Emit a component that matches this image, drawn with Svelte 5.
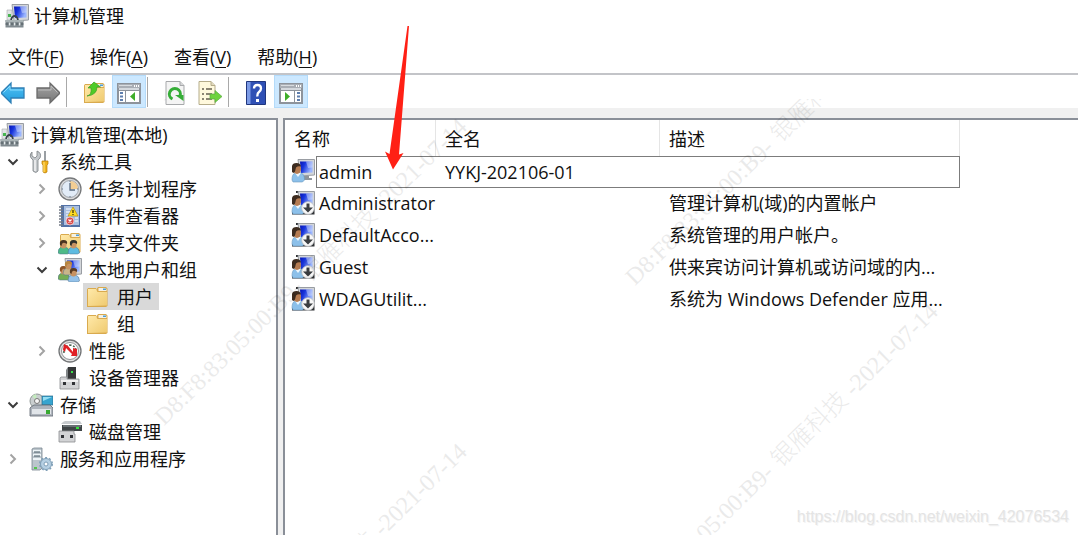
<script>
  const menus = [
    { label: '文件', key: 'F' },
    { label: '操作', key: 'A' },
    { label: '查看', key: 'V' },
    { label: '帮助', key: 'H' },
  ];

  const tools = [
    { icon: 'back', label: '后退', edge: true },
    { icon: 'forward', label: '前进' },
    null,
    { icon: 'folderUp', label: '上一级' },
    { icon: 'treePane', label: '显示/隐藏控制台树', on: true },
    null,
    { icon: 'refresh', label: '刷新' },
    { icon: 'export', label: '导出列表' },
    null,
    { icon: 'help', label: '帮助' },
    { icon: 'actionPane', label: '显示/隐藏操作窗格', on: true },
  ];

  const tree = [
    { level: 0, icon: 'computer', text: '计算机管理(本地)' },
    { level: 1, icon: 'tools', text: '系统工具', state: 'open' },
    { level: 2, icon: 'clock', text: '任务计划程序', state: 'closed' },
    { level: 2, icon: 'events', text: '事件查看器', state: 'closed' },
    { level: 2, icon: 'shared', text: '共享文件夹', state: 'closed' },
    { level: 2, icon: 'users', text: '本地用户和组', state: 'open' },
    { level: 3, icon: 'folder', text: '用户', selected: true },
    { level: 3, icon: 'folder', text: '组' },
    { level: 2, icon: 'perf', text: '性能', state: 'closed' },
    { level: 2, icon: 'device', text: '设备管理器' },
    { level: 1, icon: 'storage', text: '存储', state: 'open' },
    { level: 2, icon: 'disk', text: '磁盘管理' },
    { level: 1, icon: 'services', text: '服务和应用程序', state: 'closed' },
  ];

  const accounts = [
    { name: 'admin', full: 'YYKJ-202106-01', desc: '', focused: true },
    { name: 'Administrator', full: '', desc: '管理计算机(域)的内置帐户', disabled: true },
    { name: 'DefaultAcco...', full: '', desc: '系统管理的用户帐户。', disabled: true },
    { name: 'Guest', full: '', desc: '供来宾访问计算机或访问域的内...', disabled: true },
    { name: 'WDAGUtilit...', full: '', desc: '系统为 Windows Defender 应用...', disabled: true },
  ];

  const marks = [
    [157, 97], [157, 422], [157, 747], [628, 282], [628, 607],
  ];
</script>

{#snippet pane(right)}
  <path d="M0 2h24v21H0z" fill="#8d939b" />
  <path d="M1 3h22v4H1z" fill="#a9aeb5" />
  <path d="M2 4h13v1H2z" fill="#d8dce0" />
  <path d="M17 4h1v2h-1zM19 4h1v2h-1zM21 4h1v2h-1z" fill="#fff" />
  <path d="M2 7h20v2H2z" fill="#d5d9de" />
  <path d="M2 10h20v11H2z" fill="#fff" />
  {#if right}
    <path d="M15 10h1v11h-1z" fill="#8d939b" />
    <path d="M18 11h3v2h-3zM18 14.500h3v2h-3zM18 18h3v2h-3z" fill="#5f7fae" />
    <path d="m6 11 5 4.500L6 20z" fill="#3fae2a" />
  {:else}
    <path d="M8 10h1v11H8z" fill="#8d939b" />
    <path d="M3 11h3v2H3zM3 14.500h3v2H3zM3 18h3v2H3z" fill="#5f7fae" />
    <path d="m18 11-5 4.500 5 4.500z" fill="#3fae2a" />
  {/if}
{/snippet}

{#snippet folderShape()}
  <path d="M2 4.500 3 3h8l1 2V3.500l1-1.500h8l1.500 1.500V21L21 22H2z" fill="#d9aa4e" />
  <path d="M13.500 3h7l1 1v2h-8z" fill="#f5f1e3" />
  <path d="M18 3.500h3v1.500h-3z" fill="#4d9edb" />
  <path d="M3 4h8l1.500 3H22v13.500L3 21z" fill="url(#g-folder)" />
{/snippet}

{#snippet monitor()}
  <path d="M7 .5h16.500V16L9 17z" fill="#d3d6da" stroke="#999da3" />
  <path d="M9 2.500h12.500v11L10 14z" fill="url(#g-screen)" />
  <path d="M15 2.500h6.500v6L17 9z" fill="#e3ebff" opacity=".45" />
{/snippet}

{#snippet person(x, y, hair, shirt)}
  <g transform="translate({x} {y})">
    <path d="M0 13q0-5 3.500-6h4q4 1 4 6l-2 1H2z" fill={shirt} stroke="#4e718e" stroke-width=".5" />
    <ellipse cx="5.500" cy="4.500" rx="3.200" ry="4" fill="#c79262" />
    <path d="M2 5Q1 0 5.500 0T9 4L7 3Q4 2 3.500 6z" fill={hair} />
  </g>
{/snippet}

{#snippet icon(name)}
  <svg class="icon" viewBox="0 0 24 24" aria-hidden="true">
    {#if name === 'computer'}
      {@render monitor()}
      <path d="M2 6h5v10H2z" fill="#e1e4e6" stroke="#a4a9ad" stroke-width=".6" />
      <path d="M3 10h3v3H3z" fill="#46b54f" />
      <path d="M6 16Q7 12 9.500 12T13 16" fill="none" stroke="#39424c" stroke-width="1.800" />
      <path d="M.5 16h18v7.500H.5z" fill="#7f898e" />
      <path d="M.5 16h18v2H.5z" fill="#a9b3b5" />
      <path d="M4.500 18.500v3M9.500 18.500v3M14.500 18.500v3" stroke="#e4eaeb" stroke-width="1.500" />
      <path d="M.5 20h3M6 20h2.500M11 20h2.500M16 20h2.500" stroke="#4d575c" />
    {:else if name === 'tools'}
      <path d="M3 2v4l3 2 2-2V1q5 2 3 7l-2 2v11q-2 3-5 0V10Q-1 6 3 2z" fill="#c4c8cb" stroke="#7b8084" stroke-width=".8" />
      <path d="M6 10v11" stroke="#f5f5f5" stroke-width="1.500" />
      <path d="M15 1h2v10h-2z" fill="#9a9fa3" />
      <path d="M13 11h6v3l-1 1v7q-2 2-4 0v-7l-1-1z" fill="#f0b21d" stroke="#b57a07" stroke-width=".7" />
      <path d="M15 12v10" stroke="#ffe480" />
    {:else if name === 'clock'}
      <circle cx="12" cy="12" r="11" fill="#d9dadb" stroke="#77797b" stroke-width="1.300" />
      <circle cx="12" cy="12" r="8.500" fill="#e2ecf7" stroke="#9fa4aa" />
      <path d="M12 4a8 8 0 0 1 8 8h-8z" fill="#f2cd93" />
      <path d="M12 6v7h5" fill="none" stroke="#5a6b80" stroke-width="1.300" />
      <path d="M12 4v1M12 19v1M4 12h1M19 12h1" stroke="#607080" />
    {:else if name === 'events'}
      <path d="M3 1h19v22H3z" fill="#5372a7" />
      <path d="M6 2h15v19H6z" fill="#a9bfe0" />
      <path d="M8 5h7M8 8h5M8 11h5M8 14h3M8 17h3M17 14h3M17 17h3" stroke="#fff" />
      <path d="M1 3h4M1 6h4M1 9h4M1 12h4M1 15h4M1 18h4M1 21h4" stroke="#747b86" stroke-width="1.500" />
      <path d="M15 3 20 12H10z" fill="#ffdc23" stroke="#b89008" stroke-width=".7" />
      <path d="M15 6v3M15 10v1" stroke="#3b3510" stroke-width="1.300" />
      <circle cx="12" cy="17" r="4" fill="#d84b4b" stroke="#fff" stroke-width=".6" />
      <path d="m10.500 15.500 3 3M13.500 15.500l-3 3" stroke="#fff" stroke-width="1.200" />
    {:else if name === 'shared'}
      {@render folderShape()}
      {@render person(0, 9, '#4b3421', '#4dba87')}
      {@render person(10, 9, '#30312b', '#5ebbe0')}
    {:else if name === 'users'}
      {@render monitor()}
      {@render person(0, 8, '#8d5529', '#74ad55')}
      {@render person(5, 3, '#b88640', '#c9b58a')}
      {@render person(10, 10, '#5a3b22', '#94c2ea')}
    {:else if name === 'folder'}
      {@render folderShape()}
    {:else if name === 'perf'}
      <circle cx="12" cy="12" r="11" fill="#e2e2e2" stroke="#737577" stroke-width="1.300" />
      <circle cx="12" cy="12" r="8.500" fill="#fff" stroke="#929497" />
      <path d="M6 14q-1-7 6-8 7 1 6 8" fill="none" stroke="#43614e" stroke-dasharray="2 1.500" stroke-width="1.500" />
      <path d="m6 5 4 2 5 6V9l4 1v7h-6l1-2-6-6-1 4-2-2z" fill="#e02025" />
    {:else if name === 'device'}
      <path d="M10 1h8v12h-8z" fill="#353738" />
      <path d="M8 4 10 1v12H8z" fill="#828688" />
      <path d="M13 5h2v2h-2z" fill="#3ae14a" />
      <path d="M3 11h6v2h12v10H2V12z" fill="#d2d3d5" stroke="#8b8d90" stroke-width=".8" />
      <path d="M3 14h17v2H3z" fill="#f0f0f1" />
      <path d="M5 16h3v3H5zM14 16h3v3h-3z" fill="#303236" />
    {:else if name === 'storage'}
      <circle cx="8" cy="8" r="7" fill="#c9cecf" stroke="#8e9695" />
      <path d="m3 3 5 5-1-7z" fill="#c3ebbd" />
      <circle cx="8" cy="8" r="2.500" fill="#f7f7f7" stroke="#777" />
      <path d="M13 3h11v9H13z" fill="#37a4cf" stroke="#2d6a8a" stroke-width=".7" />
      <path d="M14 4h9l-9 4z" fill="#93def3" />
      <path d="m2 14 3-2h16l3 3v8H1v-8z" fill="#aeb4bc" stroke="#5e666e" stroke-width=".8" />
      <path d="M3 16h19v5H3z" fill="#e1e5e9" />
      <path d="M17 17h4v4h-4z" fill="#38a931" />
    {:else if name === 'disk'}
      <path d="m5 2 2-1h15l2 3H3z" fill="#c7cbce" />
      <path d="M4 5h20v6H4z" fill="#3f4547" />
      <path d="M5 5h18v2H5z" fill="#697174" />
      <path d="M18 7h3v2h-3z" fill="#37e33c" />
      <path d="M1 11h15v3h1v8H1z" fill="#d2d3d5" stroke="#8b8d90" stroke-width=".8" />
      <path d="M3 15h3v3H3zM12 15h3v3h-3z" fill="#303236" />
    {:else if name === 'services'}
      <path d="m3 2 2-1h8v20l-2 2H3z" fill="#bbc5cc" stroke="#7a878f" stroke-width=".8" />
      <path d="M4 3h8v2H4zM4 7h8v2H4zM4 11h8v2H4z" fill="#edf4f7" />
      <path d="M5 5h6M5 9h6" stroke="#455963" />
      <circle cx="17" cy="17" r="5.500" fill="#b6d0e3" stroke="#7f9fb7" />
      <circle cx="17" cy="17" r="6.300" fill="none" stroke="#7f9fb7" stroke-width="1.400" stroke-dasharray="2 2" />
      <circle cx="17" cy="17" r="2" fill="#fff" stroke="#7f9fb7" />
      <path d="M5 20h3v2H5z" fill="#53c64d" />
    {:else if name === 'account' || name === 'accountOff'}
      {#if name === 'accountOff'}<path d="M5 0h5v2H5zM1 21h22.500v2.500H1zM22 14h1.500v9H22z" fill="#303336" />{/if}
      {@render monitor()}
      <path d="M13 17h5v2h3v2H11z" fill="#8e959b" />
      <path d="M1 21q0-6 3-7h6q3.500 1 3.500 7l-2 2H2z" fill="#8cc0ea" stroke="#6b98bd" stroke-width=".6" />
      <path d="m4 14 3 4 3-4z" fill="#eef6fc" />
      <ellipse cx="6" cy="10" rx="4" ry="5" fill="#b67c52" />
      <path d="M1 13V7Q1.500 4 5.500 4T10 7.500Q7 6.500 5 8.500L4 12.500 2.500 14z" fill="#3d2c20" />
      {#if name === 'accountOff'}
        <circle cx="17" cy="17" r="6.300" fill="#f8f8f8" stroke="#bcbfc2" stroke-width=".8" />
        <path d="M15.500 12.500h3v4H22l-5 5-5-5h3.500z" fill="#3b3e41" />
      {/if}
    {:else if name === 'back'}
      <path d="M0 12 10 2v5h13v10H10v5z" fill="url(#g-blue)" stroke="#2f7fb5" stroke-width="1.300" />
      <path d="M2.500 11.500 9 5v4h13" fill="none" stroke="#8adcff" />
    {:else if name === 'forward'}
      <path d="M24 12 14 2v5H1v10h13v5z" fill="url(#g-grey)" stroke="#6b6b6b" stroke-width="1.300" />
      <path d="M2 9h13V5l6.500 6.500" fill="none" stroke="#bcbcbc" />
    {:else if name === 'folderUp'}
      {@render folderShape()}
      <path d="M5 15q5-1 4-8H6l6-6 6.500 5H15q0 8-10 9z" fill="#4fcb27" stroke="#399e28" stroke-width=".7" />
    {:else if name === 'treePane'}
      {@render pane(false)}
    {:else if name === 'actionPane'}
      {@render pane(true)}
    {:else if name === 'refresh'}
      <path d="M3 .5h14l4 4v19H3z" fill="#f4f4f4" stroke="#a7a9ab" />
      <path d="M17 .5v4h4" fill="#d6d7d8" stroke="#a7a9ab" />
      <path d="M9.500 18a5.500 5.500 0 1 1 7.500-3" fill="none" stroke="#35ad37" stroke-width="3" />
      <path d="M12 14h8.500v6z" fill="#35ad37" />
    {:else if name === 'export'}
      <path d="M1 .5h12l4 4v19H1z" fill="#fff9dd" stroke="#b5ac8a" />
      <path d="M13 .5v4h4" fill="#e0d9be" stroke="#b5ac8a" />
      <path d="M4 8h2M4 13h2M4 18h2M8 8h6M8 13h6M8 18h6" stroke="#655f50" stroke-width="1.400" />
      <path d="M12 13h5V9.500l7 6-7 6V18h-5z" fill="#6ed33e" stroke="#5aa944" stroke-width=".7" />
    {:else if name === 'help'}
      <path d="M2.500.5h19v23h-19z" fill="#2f50b5" stroke="#20367e" />
      <path d="M3 1h3.500v22H3z" fill="#7c9be6" />
      <path d="M10 7.500Q10 4 13.500 4T17 7.500q0 2-2 3.500t-1.500 4.500" fill="none" stroke="#fff" stroke-width="2.300" />
      <path d="M12 18h3v3h-3z" fill="#fff" />
    {/if}
  </svg>
{/snippet}

<svg class="defs" aria-hidden="true">
  <defs>
    <linearGradient id="g-folder" x1="0" y1="0" x2="1" y2="1">
      <stop offset="0" stop-color="#ffe9a9" /><stop offset="1" stop-color="#efca70" />
    </linearGradient>
    <linearGradient id="g-screen" x1="0" y1="0" x2="1" y2=".4">
      <stop offset="0" stop-color="#0614b5" /><stop offset=".4" stop-color="#1835dc" /><stop offset="1" stop-color="#9ab5ff" />
    </linearGradient>
    <linearGradient id="g-blue" x1="0" y1="0" x2="0" y2="1">
      <stop offset="0" stop-color="#54c3f4" /><stop offset="1" stop-color="#209bdd" />
    </linearGradient>
    <linearGradient id="g-grey" x1="0" y1="0" x2="0" y2="1">
      <stop offset="0" stop-color="#a5a5a5" /><stop offset="1" stop-color="#777" />
    </linearGradient>
  </defs>
</svg>

<div class="window">
  <header class="title">{@render icon('computer')}<span>计算机管理</span></header>

  <nav class="menu">
    {#each menus as m}
      <button>{m.label}(<u>{m.key}</u>)</button>
    {/each}
  </nav>

  <div class="toolbar" role="toolbar" aria-label="工具栏">
    {#each tools as t}
      {#if t}
        <button class:on={t.on} class:edge={t.edge} aria-label={t.label}>{@render icon(t.icon)}</button>
      {:else}
        <span class="sep"></span>
      {/if}
    {/each}
  </div>

  <main class="body">
    <ul class="tree">
      {#each tree as n}
        <li class="level{n.level}">
          {#if n.level > 0}
            <span class="twist">
              {#if n.state}
                <button aria-label={n.state === 'open' ? '折叠' : '展开'} aria-expanded={n.state === 'open'}>
                  <svg class="chev {n.state}" viewBox="0 0 12 12" aria-hidden="true">
                    <path d={n.state === 'open' ? 'M1.500 3.500 6 8l4.500-4.500' : 'M3.500 1.500 8 6l-4.500 4.500'} />
                  </svg>
                </button>
              {/if}
            </span>
          {/if}
          <button class="node" class:selected={n.selected}>{@render icon(n.icon)}<span>{n.text}</span></button>
        </li>
      {/each}
    </ul>

    <section class="list">
      <table>
        <colgroup><col class="c-icon" /><col class="c-name" /><col class="c-full" /><col class="c-desc" /></colgroup>
        <thead>
          <tr><th colspan="2">名称</th><th>全名</th><th>描述</th></tr>
        </thead>
        <tbody>
          {#each accounts as a}
            <tr class:focused={a.focused}>
              <td class="pic">{@render icon(a.disabled ? 'accountOff' : 'account')}</td>
              <td class="name">{a.name}</td>
              <td>{a.full}</td>
              <td>{a.desc}</td>
            </tr>
          {/each}
        </tbody>
      </table>
    </section>
  </main>

  <div class="marks" aria-hidden="true">
    <svg>
      {#each marks as [x, y]}
        <g transform="translate({x} {y - 99}) rotate(-44.400)">
          <text x="2" y="8">D8:F8:83:05:00:B9-</text>
          <text class="han" x="206" y="8">银雁科技</text>
          <text x="308" y="8">-2021-07-14</text>
        </g>
      {/each}
    </svg>
  </div>

  <svg class="pointer" viewBox="0 0 20 144" aria-hidden="true">
    <path d="M22.500 0h1.500L14 128.500l4.500-1.500L8 143.500 0 125.500l4.500 2.500z" fill="#ff2015" />
  </svg>

  <span class="credit">https://blog.csdn.net/weixin_42076534</span>
</div>

<style>
  :global(body) {
    margin: 0;
    background: #fff;
  }
  .window {
    position: relative;
    display: flex;
    flex-direction: column;
    min-height: 100vh;
    overflow: hidden;
    color: #111;
    font: 18px/24px 'Open Sans', 'Noto Sans CJK SC', sans-serif;
  }
  button {
    margin: 0;
    padding: 0;
    border: 0;
    background: none;
    color: inherit;
    font: inherit;
  }
  .icon {
    flex: none;
    display: block;
    width: 24px;
    height: 24px;
  }
  .defs {
    position: absolute;
    width: 0;
    height: 0;
  }
  .title {
    display: flex;
    align-items: center;
    gap: 5px;
    padding: 4px 5px;
  }
  .menu {
    display: flex;
    gap: 26px;
    padding: 13px 8px 4px;
    border-bottom: 2px solid #c3c4c8;
  }
  .menu u {
    text-decoration-thickness: 1px;
    text-underline-offset: 3px;
  }
  .toolbar {
    display: flex;
    align-items: center;
    gap: 1px;
    height: 33px;
  }
  .toolbar button {
    display: flex;
    align-items: center;
    justify-content: center;
    width: 34px;
    height: 33px;
    padding-top: 2px;
    box-sizing: border-box;
  }
  .toolbar .edge {
    width: 30px;
    padding-right: 4px;
  }
  .toolbar .on {
    background: #cce8ff;
    border: 1px solid #b4dbfa;
  }
  .sep {
    width: 1px;
    height: 30px;
    margin-right: 9px;
    background: #a9a9a9;
  }
  .body {
    flex: 1;
    display: flex;
    gap: 5px;
    padding-top: 10px;
    background: #f0f0f0;
  }
  .tree {
    flex: none;
    width: 276px;
    margin: 0;
    padding: 1px 0;
    list-style: none;
    background: #fff;
    border: solid #8a8f98;
    border-width: 2px 2px 0 0;
  }
  .tree li {
    display: flex;
    height: 27px;
  }
  .level2 {
    padding-left: 29px;
  }
  .level3 {
    padding-left: 58px;
  }
  .twist {
    display: flex;
    align-items: center;
    justify-content: center;
    width: 25px;
  }
  .chev {
    display: block;
    width: 12px;
    height: 12px;
    fill: none;
    stroke: #a3a3a3;
    stroke-width: 2;
  }
  .chev.open {
    stroke: #3c3c3c;
  }
  .node {
    display: flex;
    align-items: center;
    gap: 7px;
    padding: 0 6px 0 4px;
  }
  .level0 .node {
    padding-left: 0;
  }
  .level3 .node {
    gap: 8px;
    padding-left: 2px;
  }
  .selected {
    background: #d9d9d9;
  }
  .list {
    flex: 1;
    min-width: 0;
    background: #fff;
    border: solid #8a8f98;
    border-width: 2px 0 0 2px;
  }
  table {
    width: 675px;
    table-layout: fixed;
    border-collapse: separate;
    border-spacing: 0;
  }
  .c-icon { width: 31px; }
  .c-name { width: 120px; }
  .c-full { width: 224px; }
  .c-desc { width: 300px; }
  th {
    height: 36px;
    box-sizing: border-box;
    padding: 2px 9px 0;
    border-right: 1px solid #e5e5e5;
    font-weight: 400;
    text-align: left;
  }
  td {
    height: 32px;
    box-sizing: border-box;
    padding: 0 0 2px 9px;
    white-space: nowrap;
  }
  td.pic {
    padding: 0 0 2px 6px;
  }
  td.name {
    padding-left: 3px;
  }
  .focused td:not(.pic) {
    border: solid #7c7c7c;
    border-width: 1px 0;
    padding-bottom: 0;
  }
  .focused td.name {
    border-left-width: 1px;
    padding-left: 2px;
  }
  .focused td:last-child {
    border-right-width: 1px;
  }
  .marks {
    position: absolute;
    inset: 99px 0 0;
    pointer-events: none;
  }
  .marks svg {
    display: block;
    width: 100%;
    height: 100%;
    overflow: hidden;
  }
  .marks text {
    font: 24px 'Liberation Serif', serif;
    fill: #000;
    opacity: 0.08;
  }
  .marks .han {
    font: 300 24px 'Noto Sans CJK SC', sans-serif;
  }
  .pointer {
    position: absolute;
    left: 385px;
    top: 26px;
    width: 20px;
    height: 144px;
    overflow: visible;
    pointer-events: none;
  }
  .credit {
    position: absolute;
    right: 9px;
    bottom: 6px;
    color: #e4e4e4;
    font: 16px/24px 'Liberation Sans', sans-serif;
    text-shadow: 1px 1px 0 #f4f4f4;
  }
</style>
